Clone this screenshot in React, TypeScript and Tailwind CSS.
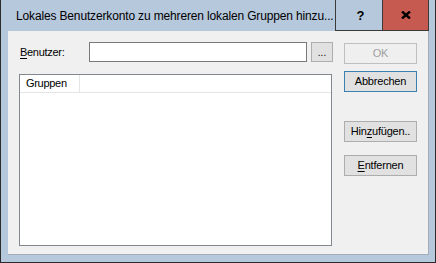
import React from "react";

const ui = { fontFamily: '"Liberation Sans", Arial, sans-serif' };
const title = { fontFamily: '"Liberation Sans", Arial, sans-serif' };

function Btn({ children, cls }: { children: React.ReactNode; cls: string }) {
  return (
    <div
      className={
        "w-[73px] h-[21px] flex items-center justify-center text-[11px] tracking-[-0.2px] " +
        cls
      }
    >
      {children}
    </div>
  );
}

export default function App() {
  return (
    <div
      className="w-[436px] h-[263px] bg-[#b6c8dc] border-x border-b border-[#2b2b2b] flex flex-col text-black"
      style={ui}
    >
      {/* title bar */}
      <div className="h-[31px] flex shrink-0">
        <div
          className="w-[334px] pl-[15px] flex items-center text-[12px] tracking-[-0.15px] whitespace-nowrap"
          style={title}
        >
          Lokales Benutzerkonto zu mehreren lokalen Gruppen hinzu...
        </div>
        <div className="w-[47px] border-l border-b border-[#3a3a3a] flex items-center justify-center pl-[3px]">
          <span className="font-bold text-[13px] leading-none" style={title}>
            ?
          </span>
        </div>
        <div className="w-[47px] bg-[#c75a50] border-x border-b border-[#3a3a3a] flex items-center justify-center">
          <svg width="10" height="8" viewBox="0 0 10 8">
            <path d="M1 0.5 L9 7.5 M9 0.5 L1 7.5" stroke="#000" strokeWidth="2.4" />
          </svg>
        </div>
        <div className="w-[6px]" />
      </div>

      {/* client area */}
      <div className="ml-[7px] w-[421px] h-[224px] bg-[#f0f0f0] border-r border-b border-[#a3acb8] flex pl-[11px] gap-[12px]">
        <div className="w-[313px] flex flex-col pt-[11px]">
          <div className="flex items-center w-[314px]">
            <div className="w-[70px] pl-[1px] text-[11px] tracking-[-0.3px]">
              <span className="underline underline-offset-[2px]">B</span>enutzer:
            </div>
            <div className="w-[218px] h-[20px] bg-white border border-[#7a7a7a]" />
            <div className="ml-[4px] w-[22px] h-[20px] bg-[#e1e1e1] border border-[#adadad] flex items-end justify-center pb-[3px] text-[10px] leading-none">
              ...
            </div>
          </div>
          <div className="mt-[12px] h-[172px] bg-white border border-[#828790] flex flex-col">
            <div className="h-[18px] flex border-b border-[#e5e5e5]">
              <div className="w-[60px] border-r border-[#e5e5e5] pl-[6px] flex items-center text-[11px] tracking-[-0.3px]">
                Gruppen
              </div>
            </div>
          </div>
        </div>

        <div className="flex flex-col pt-[12px]">
          <Btn cls="bg-[#efefef] border border-[#bfbfbf] text-[#a0a0a0]">OK</Btn>
          <div className="h-[7px]" />
          <Btn cls="bg-[#e1e1e1] border border-[#3c7fb1]">Abbrechen</Btn>
          <div className="h-[29px]" />
          <Btn cls="bg-[#e1e1e1] border border-[#adadad]">
            <span>
              Hin<span className="underline underline-offset-[2px]">z</span>ufügen..
            </span>
          </Btn>
          <div className="h-[13px]" />
          <Btn cls="bg-[#e1e1e1] border border-[#adadad]">
            <span>
              <span className="underline underline-offset-[2px]">E</span>ntfernen
            </span>
          </Btn>
        </div>
      </div>
    </div>
  );
}
